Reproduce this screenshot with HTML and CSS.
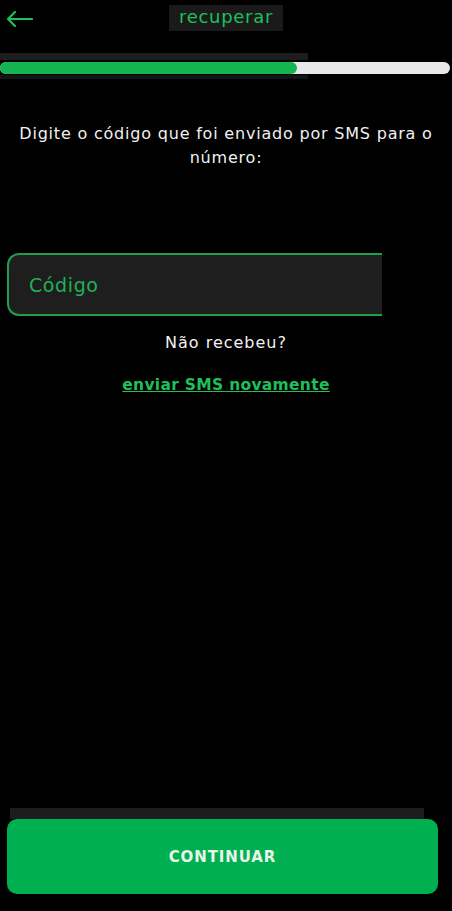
FILE: index.html
```html
<!DOCTYPE html>
<html lang="pt">
<head>
<meta charset="utf-8">
<link rel="stylesheet" href="styles.css">
</head>
<body>
<div class="screen">
  <header class="topbar">
    <svg class="back" width="27" height="16" viewBox="0 0 27 16"><path d="M26 8H2M9 1L2 8l7 7" fill="none" stroke="#1fbf5a" stroke-width="2.2" stroke-linecap="round" stroke-linejoin="round"/></svg>
    <h1 class="title">recuperar</h1>
  </header>
  <div class="progress-wrap">
    <div class="progress-shade"></div>
    <div class="progress"><div class="progress-fill" style="width:66%"></div></div>
    <div class="progress-shade low"></div>
  </div>
  <p class="instructions">Digite o código que foi enviado por SMS para o número:</p>
  <div class="field"><span class="placeholder">Código</span></div>
  <p class="noreceive">Não recebeu?</p>
  <a class="resend">enviar SMS novamente</a>
  <div class="spacer"></div>
  <div class="btn-shade"></div>
  <button class="btn">CONTINUAR</button>
</div>
</body>
</html>
```
FILE: styles.css
```css
html, body { margin: 0; padding: 0; background: #000; }
.screen {
  width: 452px; height: 911px; display: flex; flex-direction: column;
  font-family: "DejaVu Sans", "Open Sans", sans-serif; color: #eee;
}
.topbar { position: relative; height: 36px; display: flex; align-items: center; justify-content: center; }
.back { position: absolute; left: 6px; top: 11px; }
.title {
  margin: 0; font-size: 18px; font-weight: 400; color: #1fbf5a; letter-spacing: 0.7px;
  background: #1a1a1a; padding: 2px 10px 4px; line-height: 20px; margin-top: -1px;
}
.progress-wrap { margin-top: 17px; }
.progress-shade { width: 308px; height: 7px; background: #1d1d1d; margin-bottom: 2px; }
.progress-shade.low { height: 4px; background: #141414; margin: 1px 0 0; }
.progress { height: 12px; background: #e8e8e8; border-radius: 6px; margin-right: 2px; overflow: hidden; }
.progress-fill { height: 100%; background: #14b450; border-radius: 0 6px 6px 0; }
.instructions {
  margin: 43px 10px 0; text-align: center; font-size: 16px; letter-spacing: 0.8px;
  line-height: 24px; color: #f0f0f0;
}
.field {
  margin-top: 83px; margin-left: 7px; width: 375px; height: 63px; box-sizing: border-box;
  background: #1e1e1e; border: 2px solid #1f9e4c; border-right: none;
  border-radius: 12px 0 0 12px; display: flex; align-items: center; padding-left: 20px;
}
.placeholder { font-size: 19px; letter-spacing: 0.6px; color: #1fb157; }
.noreceive {
  margin: 15px 0 0; text-align: center; font-size: 16px; letter-spacing: 1px;
  color: #f2f2f2; line-height: 24px;
}
.resend {
  margin-top: 18px; align-self: center; font-size: 15.5px; font-weight: 700; letter-spacing: 0.3px;
  color: #1fbf5a; text-decoration: underline; line-height: 24px;
}
.spacer { flex: 1; }
.btn-shade { margin: 0 28px 0 10px; height: 11px; background: #1d1d1d; }
.btn {
  margin: 0 14px 17px 7px; height: 75px; border: none; border-radius: 10px;
  background: #00b050; color: #e8f5ea; font-family: "DejaVu Sans", sans-serif;
  font-size: 15px; font-weight: 700; letter-spacing: 0.9px;
}
```
